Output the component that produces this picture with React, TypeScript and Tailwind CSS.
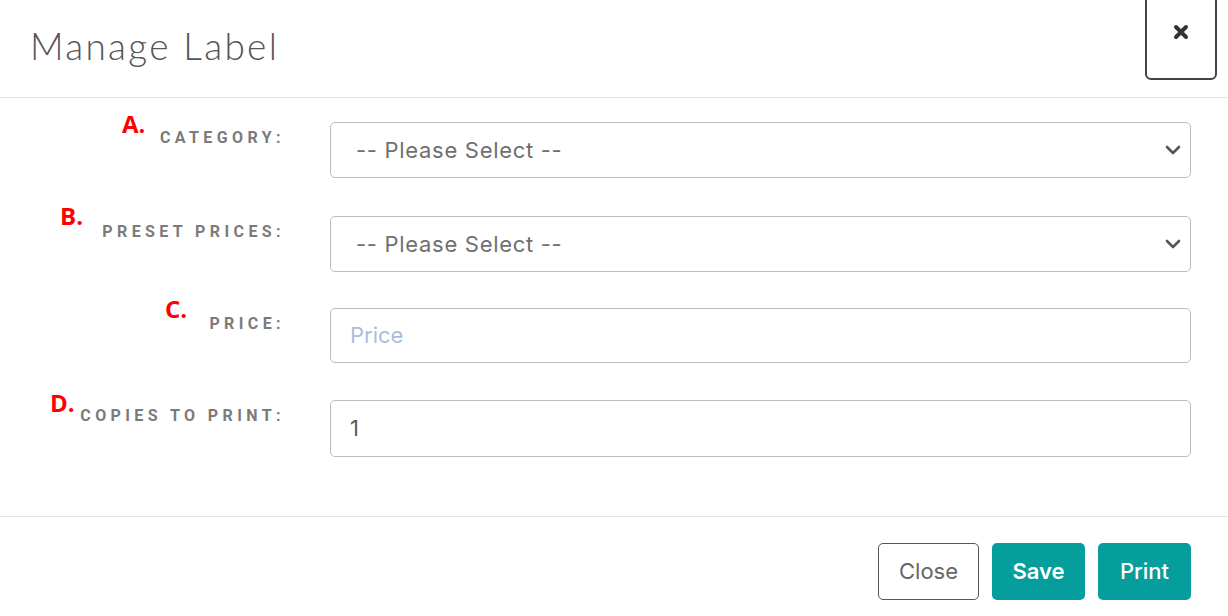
import React from "react";

const Chevron = () => (
  <svg width="16" height="10" viewBox="0 0 16 10" className="absolute right-[9px] top-1/2 -translate-y-1/2">
    <path d="M2 2 L8 8 L14 2" fill="none" stroke="#555" strokeWidth="2.6" strokeLinecap="round" strokeLinejoin="round" />
  </svg>
);

const Label = ({ children }: { children: React.ReactNode }) => (
  <div className="w-[285px] shrink-0 pt-[4px] text-right text-[16px] font-bold uppercase tracking-[4.4px] text-[#7b7b7b]" style={{ fontFamily: "Roboto, 'Liberation Sans', sans-serif" }}>
    {children}
  </div>
);

const Mark = ({ children, className }: { children: React.ReactNode; className: string }) => (
  <span className={"absolute text-[24px] font-bold leading-none text-[#ff0000] " + className} style={{ fontFamily: "'Open Sans', 'Liberation Sans', sans-serif" }}>
    {children}
  </span>
);

export default function App() {
  const inputFont = { fontFamily: "Inter, Roboto, 'Liberation Sans', sans-serif" };
  const box = "relative ml-[45px] flex flex-1 items-center rounded-[5px] border-[1.5px] border-[#bdbdbd] text-[22px]";
  return (
    <div className="relative h-[616px] w-[1228px] overflow-hidden bg-white">
      {/* header */}
      <div className="flex h-[98px] items-start justify-between border-b border-[#e4e6ea] pl-[30px] pr-[11px]">
        <h1 className="mt-[24px] text-[37px] font-light leading-[44px] tracking-[2.3px] text-[#555]" style={{ fontFamily: "Lato, 'Open Sans', sans-serif" }}>
          Manage Label
        </h1>
        <button className="-mt-[12px] flex h-[92px] w-[72px] items-center justify-center rounded-b-[6px] border-2 border-[#444] bg-white">
          <svg width="16" height="16" viewBox="0 0 16 16" className="-mt-[4px]">
            <path d="M3 3 L13 13 M13 3 L3 13" stroke="#333" strokeWidth="4" strokeLinecap="round" />
          </svg>
        </button>
      </div>

      {/* body */}
      <div className="relative flex h-[419px] flex-col gap-[38px] border-b border-[#e4e6ea] pr-[37px] pt-[24px]">
        <div className="flex">
          <Label>Category:</Label>
          <div className={box + " h-[56px] pl-[25px] tracking-[0.7px] text-[#6f6f6f]"} style={inputFont}>
            -- Please Select --
            <Chevron />
          </div>
        </div>
        <div className="flex">
          <Label>Preset Prices:</Label>
          <div className={box + " h-[56px] pl-[25px] tracking-[0.7px] text-[#6f6f6f]"} style={inputFont}>
            -- Please Select --
            <Chevron />
          </div>
        </div>
        <div className="-mt-[2px] flex">
          <Label>Price:</Label>
          <div className={box + " h-[55px] pl-[19px] text-[#a9bedb]"} style={inputFont}>
            Price
          </div>
        </div>
        <div className="-mt-[1px] flex">
          <Label>Copies to print:</Label>
          <div className={box + " h-[57px] pl-[19px] text-[#5b5b5b]"} style={inputFont}>
            1
          </div>
        </div>

        <Mark className="left-[122px] top-[14px]">A.</Mark>
        <Mark className="left-[60px] top-[106px]">B.</Mark>
        <Mark className="left-[165px] top-[199px]">C.</Mark>
        <Mark className="left-[50px] top-[293px]">D.</Mark>
      </div>

      {/* footer */}
      <div className="flex justify-end gap-[13px] pr-[37px] pt-[26px]" style={inputFont}>
        <button className="h-[57px] w-[101px] rounded-[5px] border-[1.5px] border-[#555] bg-white text-[22px] text-[#666]">Close</button>
        <button className="h-[57px] w-[93px] rounded-[5px] bg-[#059e9c] text-[22px] font-semibold text-white">Save</button>
        <button className="h-[57px] w-[93px] rounded-[5px] bg-[#059e9c] text-[22px] font-medium text-white">Print</button>
      </div>
    </div>
  );
}
